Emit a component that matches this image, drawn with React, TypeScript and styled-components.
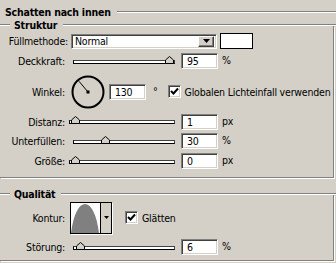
import React from 'react'
import styled, { createGlobalStyle, css } from 'styled-components'

const GlobalStyle = createGlobalStyle`
  html, body {
    margin: 0;
    padding: 0;
    background: #d4d0c8;
  }
  body {
    width: 336px;
    height: 263px;
    overflow: hidden;
    font-family: 'DejaVu Sans', 'Liberation Sans', sans-serif;
    font-stretch: condensed;
    font-size: 10.5px;
    letter-spacing: -0.2px;
    color: #000;
  }
`

// sunken 3d edge, like a classic windows edit field
const sunken = css`
  box-sizing: border-box;
  border: 1px solid;
  border-color: #808080 #fff #fff #808080;
  box-shadow: inset 1px 1px 0 #404040, inset -1px -1px 0 #d4d0c8;
  background: #fff;
`

const sliderRows = [
  { label: 'Distanz:', ml: 4, w: 106, thumb: 1, value: '1', unit: 'px' },
  { label: 'Unterfüllen:', ml: 8, w: 102, thumb: 27, value: '30', unit: '%' },
  { label: 'Größe:', ml: 4, w: 106, thumb: 1, value: '0', unit: 'px' },
]

const Slider = ({ ml, w, thumb }) => (
  <Track $ml={ml} $w={w}>
    <Thumb style={{ left: thumb }} width="9" height="8" viewBox="0 0 9 8">
      <polygon points="0.5,7.5 0.5,4 4.5,0.5 8.5,4 8.5,7.5" fill="#d4d0c8" stroke="#000" strokeWidth="1" />
    </Thumb>
  </Track>
)

const Check = ({ ml }) => (
  <CheckBox $ml={ml}>
    <svg width="9" height="9" viewBox="0 0 9 9">
      <path d="M1 4 L3.5 6.5 L8 1.5" fill="none" stroke="#000" strokeWidth="2" />
    </svg>
  </CheckBox>
)

const App = () => {
  // winkel 130 degree
  const rad = (130 * Math.PI) / 180
  const x2 = 17 + Math.cos(rad) * 14
  const y2 = 17 - Math.sin(rad) * 14

  return (
    <Panel>
      <GlobalStyle />
      <TitleRow>
        <TitleText>Schatten nach innen</TitleText>
        <Etched />
      </TitleRow>

      <GroupHead>
        <Etched $w={10} />
        <Legend>Struktur</Legend>
        <Etched />
      </GroupHead>
      <GroupBody $pt={5} $pb={6}>
        <Row $h={20}>
          <Label $w={68}>Füllmethode:</Label>
          <Select>
            <SelectText>Normal</SelectText>
            <DropButton>
              <svg width="7" height="4" viewBox="0 0 7 4">
                <polygon points="0,0 7,0 3.5,4" fill="#000" />
              </svg>
            </DropButton>
          </Select>
          <Swatch />
        </Row>
        <Row $h={20}>
          <Label>Deckkraft:</Label>
          <Slider ml={8} w={102} thumb={91} />
          <Field readOnly value="95" $ml={6} />
          <Unit>%</Unit>
        </Row>
        <Row $h={41}>
          <Label>Winkel:</Label>
          <Dial width="34" height="34" viewBox="0 0 34 34">
            <circle cx="17" cy="17" r="15.5" fill="none" stroke="#000" strokeWidth="2" />
            <line x1="17" y1="17" x2={x2} y2={y2} stroke="#000" strokeWidth="1" />
            <rect x="15.5" y="15.5" width="3" height="3" fill="#000" />
          </Dial>
          <Field readOnly value="130" $ml={4} />
          <Unit $ml={7}>°</Unit>
          <Check ml={10} />
          <CheckLabel>Globalen Lichteinfall verwenden</CheckLabel>
        </Row>
        {sliderRows.map((r, i) => (
          <Row key={r.label} $h={i === 0 ? 19 : 20}>
            <Label>{r.label}</Label>
            <Slider ml={r.ml} w={r.w} thumb={r.thumb} />
            <Field readOnly value={r.value} $ml={6} />
            <Unit>{r.unit}</Unit>
          </Row>
        ))}
      </GroupBody>

      <GroupHead $mt={15}>
        <Etched $w={10} />
        <Legend>Qualität</Legend>
        <Etched />
      </GroupHead>
      <GroupBody $pt={5} $pb={1}>
        <Row $h={35}>
          <Label>Kontur:</Label>
          <ContourPicker>
            <ContourPreview>
              <svg width="28" height="30" viewBox="0 0 28 30">
                <path d="M0 30 C 5 -8.7 23 -8.7 28 30 Z" fill="#808080" />
              </svg>
            </ContourPreview>
            <ContourArrow>
              <svg width="5" height="3" viewBox="0 0 5 3">
                <polygon points="0,0 5,0 2.5,3" fill="#000" />
              </svg>
            </ContourArrow>
          </ContourPicker>
          <Check ml={13} />
          <CheckLabel>Glätten</CheckLabel>
        </Row>
        <Row $h={24}>
          <Label>Störung:</Label>
          <Slider ml={8} w={102} thumb={2} />
          <Field readOnly value="6" $ml={6} />
          <Unit>%</Unit>
        </Row>
      </GroupBody>
    </Panel>
  )
}

//
const Panel = styled.div`
  width: 336px;
  height: 263px;
  overflow: hidden;
`

// title
const TitleRow = styled.div`
  display: flex;
  align-items: center;
  height: 24px;
  padding-left: 5px;
`

const TitleText = styled.div`
  font-weight: bold;
  white-space: nowrap;
  margin-right: 6px;
`

const Etched = styled.div<{ $w?: number }>`
  box-sizing: border-box;
  height: 2px;
  border-top: 1px solid #808080;
  border-bottom: 1px solid #fff;
  ${({ $w }) => ($w ? `width: ${$w}px; flex-shrink: 0;` : 'flex: 1;')}
`

// group box
const GroupHead = styled.div<{ $mt?: number }>`
  display: flex;
  align-items: center;
  height: 2px;
  margin-top: ${({ $mt }) => $mt || 0}px;
`

const Legend = styled.div`
  font-weight: bold;
  line-height: 2px;
  padding: 0 6px 0 4px;
  white-space: nowrap;
`

const GroupBody = styled.div<{ $pt: number; $pb: number }>`
  box-sizing: border-box;
  width: 334px;
  padding: ${({ $pt, $pb }) => `${$pt}px 0 ${$pb}px 0`};
  border-right: 1px solid #808080;
  border-bottom: 1px solid #808080;
  box-shadow: 1px 1px 0 #fff;
`

const Row = styled.div<{ $h: number }>`
  display: flex;
  align-items: center;
  height: ${({ $h }) => $h}px;
`

const Label = styled.div<{ $w?: number }>`
  flex-shrink: 0;
  width: ${({ $w }) => $w || 65}px;
  text-align: right;
  white-space: nowrap;
`

// select
const Select = styled.div`
  ${sunken};
  display: flex;
  align-items: center;
  width: 146px;
  height: 15px;
  margin-left: 3px;
  padding: 2px;
`

const SelectText = styled.div`
  flex: 1;
  padding-left: 1px;
`

const DropButton = styled.div`
  box-sizing: border-box;
  display: flex;
  align-items: center;
  justify-content: center;
  width: 16px;
  height: 11px;
  background: #d4d0c8;
  border: 1px solid;
  border-color: #fff #404040 #404040 #fff;
  box-shadow: inset -1px -1px 0 #808080;
`

const Swatch = styled.div`
  box-sizing: border-box;
  width: 33px;
  height: 16px;
  margin-left: 3px;
  background: #fff;
  border: 1px solid #000;
`

// slider
const Track = styled.div<{ $ml: number; $w: number }>`
  position: relative;
  box-sizing: border-box;
  width: ${({ $w }) => $w}px;
  height: 4px;
  margin-left: ${({ $ml }) => $ml}px;
  margin-top: 1px;
  background: #fff;
  border: 1px solid #000;
  border-top-color: #404040;
  border-right-color: #404040;
`

const Thumb = styled.svg`
  position: absolute;
  bottom: -1px;
  display: block;
`

// number field
const Field = styled.input<{ $ml: number }>`
  ${sunken};
  width: 37px;
  height: 16px;
  margin: 0 0 0 ${({ $ml }) => $ml}px;
  padding: 0 0 0 5px;
  font: inherit;
  letter-spacing: inherit;
  color: #000;
  outline: none;
`

const Unit = styled.div<{ $ml?: number }>`
  margin-left: ${({ $ml }) => $ml || 4}px;
  margin-top: -2px;
`

const Dial = styled.svg`
  display: block;
  margin-left: 6px;
`

// checkbox
const CheckBox = styled.div<{ $ml: number }>`
  ${sunken};
  display: flex;
  align-items: center;
  justify-content: center;
  width: 13px;
  height: 13px;
  margin-left: ${({ $ml }) => $ml}px;
`

const CheckLabel = styled.div`
  margin-left: 4px;
  white-space: nowrap;
`

// contour picker
const ContourPicker = styled.div`
  box-sizing: border-box;
  display: flex;
  width: 42px;
  height: 32px;
  margin-left: 5px;
  border: 1px solid #000;
  box-shadow: 1px 1px 0 #fff;
`

const ContourPreview = styled.div`
  display: flex;
  align-items: flex-end;
  width: 29px;
  background: #fff;
  border-right: 1px solid #000;
`

const ContourArrow = styled.div`
  flex: 1;
  display: flex;
  align-items: center;
  justify-content: center;
  background: #d4d0c8;
`

export default App
